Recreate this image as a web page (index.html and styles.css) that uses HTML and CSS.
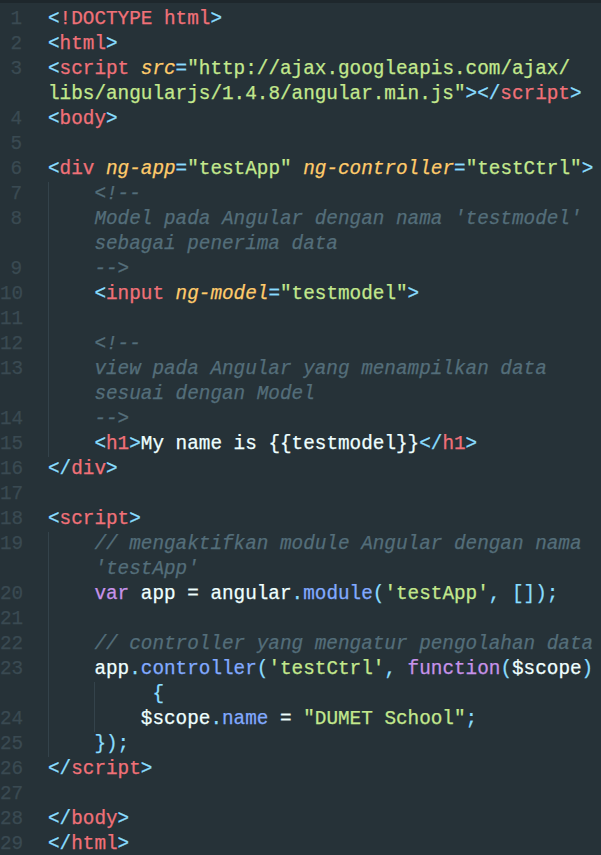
FILE: index.html
```html
<!DOCTYPE html>
<html>
<head>
<meta charset="utf-8">
<link rel="stylesheet" href="styles.css">
</head>
<body>
<div class="tabedge"></div>
<div class="editor">
<div class="row"><span class="n">1</span><span class="code"><span class="p">&lt;</span><span class="t">!DOCTYPE html</span><span class="p">&gt;</span></span></div>
<div class="row"><span class="n">2</span><span class="code"><span class="p">&lt;</span><span class="t">html</span><span class="p">&gt;</span></span></div>
<div class="row"><span class="n">3</span><span class="code"><span class="p">&lt;</span><span class="t">script</span> <span class="a">src</span><span class="p">=</span><span class="s">"http://ajax.googleapis.com/ajax/</span></span></div>
<div class="row"><span class="n"></span><span class="code"><span class="s">libs/angularjs/1.4.8/angular.min.js"</span><span class="p">&gt;&lt;/</span><span class="t">script</span><span class="p">&gt;</span></span></div>
<div class="row"><span class="n">4</span><span class="code"><span class="p">&lt;</span><span class="t">body</span><span class="p">&gt;</span></span></div>
<div class="row"><span class="n">5</span><span class="code"></span></div>
<div class="row"><span class="n">6</span><span class="code"><span class="p">&lt;</span><span class="t">div</span> <span class="a">ng-app</span><span class="p">=</span><span class="s">"testApp"</span> <span class="a">ng-controller</span><span class="p">=</span><span class="s">"testCtrl"</span><span class="p">&gt;</span></span></div>
<div class="row"><span class="n">7</span><span class="code"><span class="ind"></span><span class="c">&lt;!--</span></span></div>
<div class="row"><span class="n">8</span><span class="code"><span class="ind"></span><span class="c">Model pada Angular dengan nama 'testmodel'</span></span></div>
<div class="row"><span class="n"></span><span class="code"><span class="ind"></span><span class="c">sebagai penerima data</span></span></div>
<div class="row"><span class="n">9</span><span class="code"><span class="ind"></span><span class="c">--&gt;</span></span></div>
<div class="row"><span class="n">10</span><span class="code"><span class="ind"></span><span class="p">&lt;</span><span class="t">input</span> <span class="a">ng-model</span><span class="p">=</span><span class="s">"testmodel"</span><span class="p">&gt;</span></span></div>
<div class="row"><span class="n">11</span><span class="code"><span class="ind"></span></span></div>
<div class="row"><span class="n">12</span><span class="code"><span class="ind"></span><span class="c">&lt;!--</span></span></div>
<div class="row"><span class="n">13</span><span class="code"><span class="ind"></span><span class="c">view pada Angular yang menampilkan data</span></span></div>
<div class="row"><span class="n"></span><span class="code"><span class="ind"></span><span class="c">sesuai dengan Model</span></span></div>
<div class="row"><span class="n">14</span><span class="code"><span class="ind"></span><span class="c">--&gt;</span></span></div>
<div class="row"><span class="n">15</span><span class="code"><span class="ind"></span><span class="p">&lt;</span><span class="t">h1</span><span class="p">&gt;</span><span class="w">My name is {{testmodel}}</span><span class="p">&lt;/</span><span class="t">h1</span><span class="p">&gt;</span></span></div>
<div class="row"><span class="n">16</span><span class="code"><span class="p">&lt;/</span><span class="t">div</span><span class="p">&gt;</span></span></div>
<div class="row"><span class="n">17</span><span class="code"></span></div>
<div class="row"><span class="n">18</span><span class="code"><span class="p">&lt;</span><span class="t">script</span><span class="p">&gt;</span></span></div>
<div class="row"><span class="n">19</span><span class="code"><span class="ind"></span><span class="c">// mengaktifkan module Angular dengan nama</span></span></div>
<div class="row"><span class="n"></span><span class="code"><span class="ind"></span><span class="c">'testApp'</span></span></div>
<div class="row"><span class="n">20</span><span class="code"><span class="ind"></span><span class="k">var</span><span class="w"> app = angular</span><span class="p">.</span><span class="f">module</span><span class="p">(</span><span class="s">'testApp'</span><span class="p">, [])</span><span class="p">;</span></span></div>
<div class="row"><span class="n">21</span><span class="code"><span class="ind"></span></span></div>
<div class="row"><span class="n">22</span><span class="code"><span class="ind"></span><span class="c">// controller yang mengatur pengolahan data</span></span></div>
<div class="row"><span class="n">23</span><span class="code"><span class="ind"></span><span class="w">app</span><span class="p">.</span><span class="f">controller</span><span class="p">(</span><span class="s">'testCtrl'</span><span class="p">, </span><span class="k">function</span><span class="p">(</span><span class="w">$scope</span><span class="p">)</span></span></div>
<div class="row"><span class="n"></span><span class="code"><span class="ind"></span><span class="ind"></span><span class="p"> {</span></span></div>
<div class="row"><span class="n">24</span><span class="code"><span class="ind"></span><span class="ind"></span><span class="w">$scope</span><span class="p">.</span><span class="f">name</span><span class="w"> = </span><span class="s">"DUMET School"</span><span class="p">;</span></span></div>
<div class="row"><span class="n">25</span><span class="code"><span class="ind"></span><span class="p">});</span></span></div>
<div class="row"><span class="n">26</span><span class="code"><span class="p">&lt;/</span><span class="t">script</span><span class="p">&gt;</span></span></div>
<div class="row"><span class="n">27</span><span class="code"></span></div>
<div class="row"><span class="n">28</span><span class="code"><span class="p">&lt;/</span><span class="t">body</span><span class="p">&gt;</span></span></div>
<div class="row"><span class="n">29</span><span class="code"><span class="p">&lt;/</span><span class="t">html</span><span class="p">&gt;</span></span></div>
</div>
</body>
</html>
```

FILE: styles.css
```css
html, body {
  margin: 0;
  padding: 0;
  background: #263238;
  height: 100%;
  overflow: hidden;
}

.tabedge {
  height: 3px;
  background: #1e272c;
}

.editor {
  padding-top: 4px;
  font-family: "Liberation Mono", "DejaVu Sans Mono", monospace;
  font-size: 19.33px;
  color: #eeffff;
  -webkit-text-stroke: 0.25px;
}

.row {
  display: flex;
  height: 25px;
  line-height: 25px;
  white-space: pre;
}

.n {
  flex: none;
  width: 22px;
  margin-right: 26px;
  text-align: right;
  color: #3a4a52;
}

.code {
  display: block;
  white-space: pre;
}

.ind {
  display: inline-block;
  vertical-align: top;
  width: 4ch;
  height: 25px;
  background: linear-gradient(to right, #34434b 1px, transparent 1px);
}

.p { color: #89ddff; }
.t { color: #f07178; }
.a { color: #ffcb6b; font-style: italic; }
.s { color: #c3e88d; }
.c { color: #546e7a; font-style: italic; }
.k { color: #c792ea; }
.f { color: #82aaff; }
.w { color: #eeffff; }
```
